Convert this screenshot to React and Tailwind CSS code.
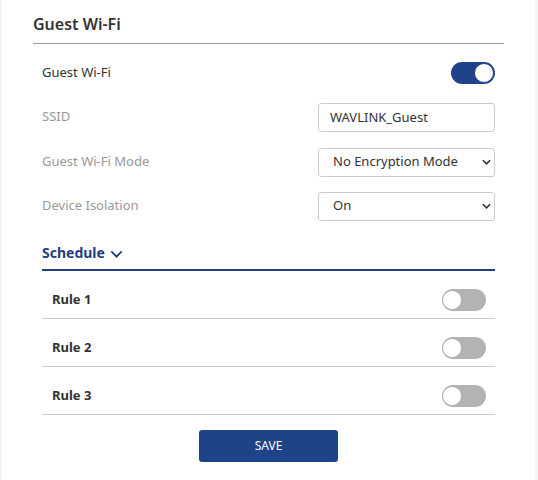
import React, { useState } from "react";

const Toggle = ({ on, onClick }) => (
  <button
    onClick={onClick}
    className={`relative w-[44px] h-[22px] rounded-full ${on ? "bg-[#1e4388]" : "bg-[#b3b3b3]"}`}
  >
    <span
      className={`absolute top-[1px] w-[20px] h-[20px] rounded-full bg-white border ${
        on ? "left-[23px] border-[#1e4388]" : "left-0 border-[#b3b3b3]"
      }`}
    />
  </button>
);

const Chevron = ({ className, width = 1.8 }) => (
  <svg viewBox="0 0 10 6" className={className} fill="none" stroke="currentColor" strokeWidth={width}>
    <path d="M1 1l4 4 4-4" />
  </svg>
);

const SelectBox = ({ value, options }) => (
  <div className="relative w-[177px] h-[29px]">
    <select
      defaultValue={value}
      className="appearance-none w-full h-full border border-[#ccc] rounded-[3px] pl-[14px] text-[13px] text-[#333] bg-white outline-none"
    >
      {options.map((o) => (
        <option key={o}>{o}</option>
      ))}
    </select>
    <Chevron className="absolute right-[4px] top-[11px] w-[9px] h-[6px] text-[#333] pointer-events-none" />
  </div>
);

const App = () => {
  const [guest, setGuest] = useState(true);
  const [rules, setRules] = useState([false, false, false]);

  return (
    <div
      className="min-h-screen bg-[#f4f4f4] px-[2px] pr-[3px]"
      style={{ fontFamily: '"Noto Sans", "Open Sans", sans-serif' }}
    >
      <div className="bg-white min-h-[480px] px-[31px] pt-[13px]">
        <h2 className="text-[16px] font-semibold text-[#333] pb-[8px] border-b border-[#999] leading-[22px]">
          Guest Wi-Fi
        </h2>

        <div className="px-[9px]">
          <div className="flex items-center justify-between h-[44px] mt-[7px]">
            <span className="text-[13px] text-[#333]">Guest Wi-Fi</span>
            <Toggle on={guest} onClick={() => setGuest(!guest)} />
          </div>

          <div className="flex items-center justify-between h-[44px]">
            <span className="text-[13px] text-[#999]">SSID</span>
            <input
              defaultValue="WAVLINK_Guest"
              className="w-[177px] h-[29px] border border-[#ccc] rounded-[3px] px-[11px] text-[13px] text-[#333] outline-none"
            />
          </div>

          <div className="flex items-center justify-between h-[44px] mt-[1px]">
            <span className="text-[13px] text-[#999]">Guest Wi-Fi Mode</span>
            <SelectBox value="No Encryption Mode" options={["No Encryption Mode", "WPA2-PSK", "WPA/WPA2-PSK"]} />
          </div>

          <div className="flex items-center justify-between h-[44px]">
            <span className="text-[13px] text-[#999]">Device Isolation</span>
            <SelectBox value="On" options={["On", "Off"]} />
          </div>

          <div className="mt-[14px] pb-[6px] border-b-2 border-[#1e3f80] flex items-center gap-[5px]">
            <span className="text-[14px] font-bold text-[#1e3f80]">Schedule</span>
            <Chevron width={1.4} className="w-[13px] h-[8px] text-[#1e3f80] mt-[2px]" />
          </div>

          {rules.map((on, i) => (
            <div
              key={i}
              className="flex items-center justify-between h-[48px] pt-[10px] pl-[10px] pr-[9px] border-b border-[#ccc]"
            >
              <span className="text-[13px] font-bold text-[#333]">Rule {i + 1}</span>
              <Toggle
                on={on}
                onClick={() => setRules(rules.map((r, j) => (j === i ? !r : r)))}
              />
            </div>
          ))}

          <div className="flex justify-center mt-[15px]">
            <button className="w-[139px] h-[32px] rounded-[3px] bg-[#1e4388] text-white text-[12px]">
              SAVE
            </button>
          </div>
        </div>
      </div>
    </div>
  );
};

export default App;
